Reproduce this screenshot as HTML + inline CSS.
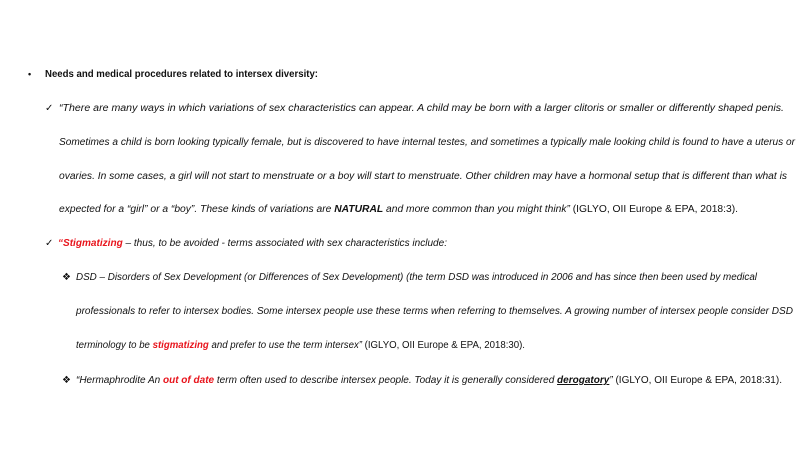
<!DOCTYPE html>
<html><head><meta charset="utf-8"><style>
html,body{margin:0;padding:0;background:#fff;width:800px;height:450px;overflow:hidden}
svg{display:block}
text{font-family:"Liberation Sans",sans-serif;font-size:10px;font-style:italic;fill:#111}
.b{font-weight:bold}
.r{fill:#e8141c;font-weight:bold}
.n{font-style:normal}
.s{font-style:normal;font-family:"DejaVu Sans",sans-serif;font-size:10px}
</style></head><body>
<svg width="800" height="450" viewBox="0 0 800 450">
<text x="28" y="77" class="n b" style="font-size:9px">•</text>
<text x="45" y="77" class="n b" textLength="273" lengthAdjust="spacingAndGlyphs">Needs and medical procedures related to intersex diversity:</text>

<text x="45" y="111" class="s">✓</text>
<text x="59" y="111" textLength="725" lengthAdjust="spacingAndGlyphs">“There are many ways in which variations of sex characteristics can appear.  A child may be born with a larger clitoris or smaller or differently shaped penis.</text>
<text x="59" y="145" textLength="736" lengthAdjust="spacingAndGlyphs">Sometimes a child is born looking typically female, but is discovered to have internal testes, and sometimes a typically male looking child is found to have a uterus or</text>
<text x="59" y="179" textLength="728" lengthAdjust="spacingAndGlyphs">ovaries. In some cases, a girl will not start to menstruate or a boy will start to menstruate. Other children may have a hormonal setup that is different than what is</text>
<text x="59" y="212" textLength="679" lengthAdjust="spacingAndGlyphs">expected for a “girl” or a “boy”. These kinds of variations are <tspan class="b">NATURAL</tspan> and more common than you might think” <tspan class="n">(IGLYO, OII Europe &amp; EPA, 2018:3).</tspan></text>

<text x="45" y="246" class="s">✓</text>
<text x="58" y="246" textLength="389" lengthAdjust="spacingAndGlyphs"><tspan class="r">“Stigmatizing</tspan> – thus, to be avoided - terms associated with sex characteristics include:</text>

<text x="62" y="280" class="s">❖</text>
<text x="76" y="280" textLength="681" lengthAdjust="spacingAndGlyphs">DSD – Disorders of Sex Development (or Differences of Sex Development) (the term DSD was introduced in 2006 and has since then been used by medical</text>
<text x="76" y="314" textLength="717" lengthAdjust="spacingAndGlyphs">professionals to refer to intersex bodies. Some intersex people use these terms when referring to themselves. A growing number of intersex people consider DSD</text>
<text x="76" y="348" textLength="449" lengthAdjust="spacingAndGlyphs">terminology to be <tspan class="r">stigmatizing</tspan> and prefer to use the term intersex” <tspan class="n">(IGLYO, OII Europe &amp; EPA, 2018:30).</tspan></text>

<text x="62" y="383" class="s">❖</text>
<text x="76" y="383" textLength="706" lengthAdjust="spacingAndGlyphs">“Hermaphrodite An <tspan class="r">out of date</tspan> term often used to describe intersex people. Today it is generally considered <tspan class="b" text-decoration="underline">derogatory</tspan>” <tspan class="n">(IGLYO, OII Europe &amp; EPA, 2018:31).</tspan></text>
</svg>
</body></html>
